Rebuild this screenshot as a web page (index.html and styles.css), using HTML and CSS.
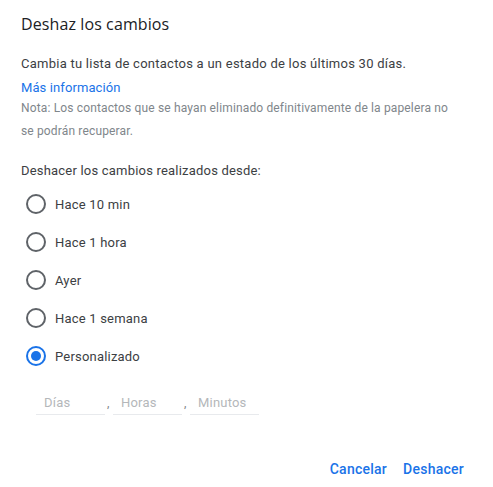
FILE: index.html
```html
<!DOCTYPE html>
<html lang="es">
<head>
  <meta charset="UTF-8" />
  <title>Deshaz los cambios</title>
  <link rel="stylesheet" href="styles.css">
</head>
<body>
  <div class="dialog">
    <h1 class="title">Deshaz los cambios</h1>
    <p class="lead">Cambia tu lista de contactos a un estado de los últimos 30 días.</p>
    <a class="more" href="#">Más información</a>
    <p class="note">Nota: Los contactos que se hayan eliminado definitivamente de la papelera no se podrán recuperar.</p>

    <p class="label">Deshacer los cambios realizados desde:</p>
    <div class="options">
      <label class="option"><span class="radio"></span>Hace 10 min</label>
      <label class="option"><span class="radio"></span>Hace 1 hora</label>
      <label class="option"><span class="radio"></span>Ayer</label>
      <label class="option"><span class="radio"></span>Hace 1 semana</label>
      <label class="option"><span class="radio checked"></span>Personalizado</label>
    </div>

    <div class="custom">
      <input class="field" placeholder="Días" />
      <span class="sep">,</span>
      <input class="field" placeholder="Horas" />
      <span class="sep">,</span>
      <input class="field" placeholder="Minutos" />
    </div>

    <div class="actions">
      <button class="btn">Cancelar</button>
      <button class="btn">Deshacer</button>
    </div>
  </div>
</body>
</html>
```

FILE: styles.css
```css
* {
  box-sizing: border-box;
  margin: 0;
  padding: 0;
}
body {
  font-family: Roboto, 'Liberation Sans', sans-serif;
  background: #fff;
  color: #202124;
}
.dialog {
  width: 493px;
  height: 487px;
  padding: 14px 21px 0 21px;
  display: flex;
  flex-direction: column;
}
.title {
  font-family: 'Open Sans', Roboto, sans-serif;
  font-size: 16px;
  font-weight: 400;
  line-height: 20px;
  color: #202124;
  letter-spacing: 0.1px;
}
.lead {
  margin-top: 22px;
  font-size: 13px;
  line-height: 16px;
  color: #3c4043;
  letter-spacing: 0.25px;
}
.more {
  margin-top: 8px;
  font-size: 13px;
  line-height: 16px;
  color: #1a73e8;
  text-decoration: none;
  align-self: flex-start;
  letter-spacing: 0.1px;
}
.note {
  margin-top: 1px;
  max-width: 440px;
  font-size: 12px;
  line-height: 23px;
  color: #80868b;
  letter-spacing: 0.15px;
}
.label {
  margin-top: 20px;
  font-size: 13px;
  line-height: 16px;
  color: #3c4043;
  letter-spacing: 0.2px;
}
.options {
  margin-top: 15px;
  display: flex;
  flex-direction: column;
  gap: 18px;
}
.option {
  display: flex;
  align-items: center;
  gap: 9px;
  height: 20px;
  font-size: 13px;
  color: #3c4043;
  letter-spacing: 0.2px;
}
.radio {
  width: 20px;
  height: 20px;
  margin-left: 5px;
  border: 2px solid #5f6368;
  border-radius: 50%;
  flex: none;
  position: relative;
}
.radio.checked {
  border-color: #1a73e8;
}
.radio.checked::after {
  content: "";
  position: absolute;
  left: 3px;
  top: 3px;
  width: 10px;
  height: 10px;
  border-radius: 50%;
  background: #1a73e8;
}
.custom {
  margin-top: 25px;
  margin-left: 15px;
  display: flex;
  align-items: center;
}
.field {
  width: 69px;
  height: 24px;
  border: none;
  border-bottom: 1px solid #e8eaed;
  padding: 0 8px;
  font-family: Roboto, sans-serif;
  font-size: 13px;
  color: #3c4043;
  outline: none;
  letter-spacing: 0.2px;
}
.field::placeholder {
  color: #b4b7ba;
}
.sep {
  width: 8px;
  font-size: 12px;
  color: #80868b;
  padding-left: 2px;
  line-height: 16px;
}
.actions {
  margin-top: auto;
  margin-bottom: 4px;
  display: flex;
  justify-content: flex-end;
  gap: 4px;
  padding-right: 2px;
}
.btn {
  background: none;
  border: none;
  font-family: Roboto, sans-serif;
  font-size: 14px;
  font-weight: 500;
  color: #1a73e8;
  padding: 6px 6px;
  letter-spacing: 0.25px;
  cursor: pointer;
}
```
